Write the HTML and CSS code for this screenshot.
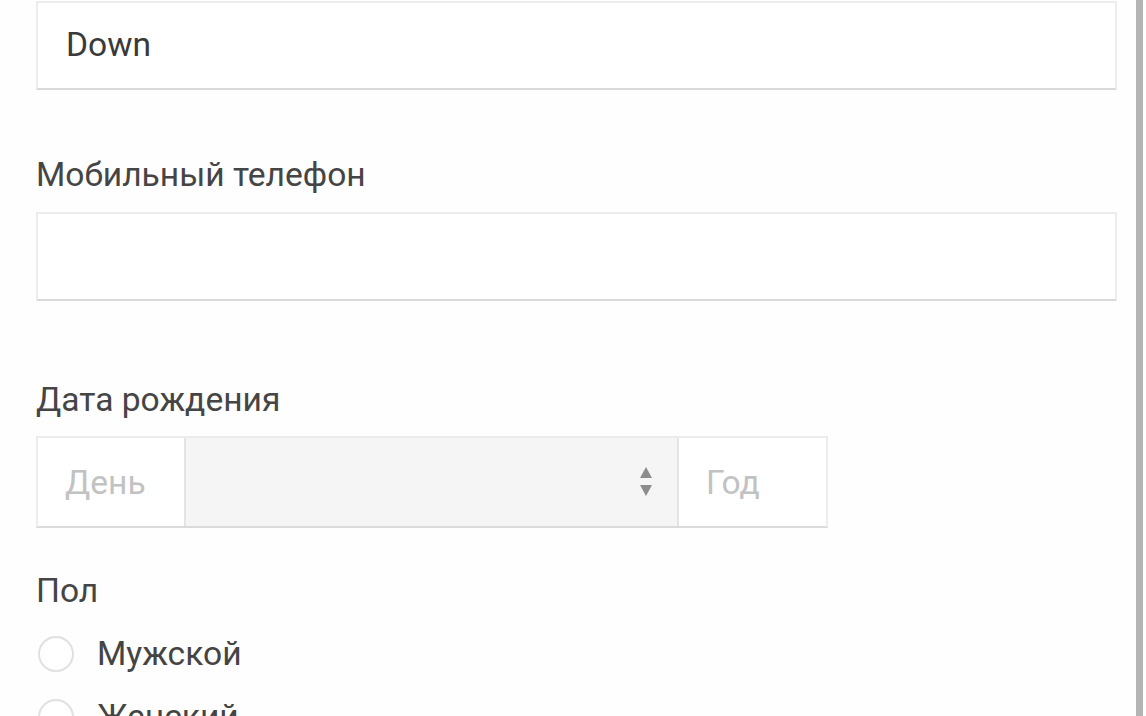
FILE: index.html
```html
<!DOCTYPE html>
<html lang="ru">
<head>
<meta charset="utf-8">
<link rel="stylesheet" href="styles.css">
</head>
<body>
<div class="page">
  <form class="form">
    <div class="input filled">Down</div>
    <div class="field">
      <div class="label">Мобильный телефон</div>
      <div class="input"></div>
    </div>
    <div class="field date-field">
      <div class="label">Дата рождения</div>
      <div class="date">
        <div class="cell day">День</div>
        <div class="cell month">
          <svg class="arrows" width="14" height="36" viewBox="0 0 14 36">
            <path d="M7 3 L13 14 L1 14 Z" fill="#8c8c8c"/>
            <path d="M1 21 L13 21 L7 32 Z" fill="#8c8c8c"/>
          </svg>
        </div>
        <div class="cell year">Год</div>
      </div>
    </div>
    <div class="field gender">
      <div class="label">Пол</div>
      <label class="radio"><span class="circle"></span><span>Мужской</span></label>
      <label class="radio"><span class="circle"></span><span>Женский</span></label>
    </div>
  </form>
  <div class="scrollbar"></div>
</div>
</body>
</html>
```

FILE: styles.css
```css
html, body {
  margin: 0;
  padding: 0;
  background: #fefefe;
  overflow: hidden;
}
body {
  font-family: Roboto, "Noto Sans", sans-serif;
  color: #444;
  font-size: 33.6px;
}
.page {
  display: flex;
  height: 716px;
  padding-left: 36px;
}
.form {
  width: 1081px;
  display: flex;
  flex-direction: column;
  padding-top: 1px;
}
.form > * {
  flex-shrink: 0;
}
.scrollbar {
  width: 7px;
  margin-left: 19px;
  background: #b4b4b4;
  height: 716px;
  flex-shrink: 0;
}
.input {
  box-sizing: border-box;
  height: 89px;
  border: 2px solid #ececec;
  border-bottom-color: #dadada;
  background: #fff;
  display: flex;
  align-items: center;
  padding-left: 28px;
  color: #3a3a3a;
  flex-shrink: 0;
}
.filled {
  padding-bottom: 2px;
}
.field {
  display: flex;
  flex-direction: column;
}
.label {
  line-height: 38px;
  color: #454545;
}
.field:nth-child(2) {
  margin-top: 66px;
}
.field:nth-child(2) .label {
  margin-bottom: 18px;
}
.date-field {
  margin-top: 80px;
}
.date-field .label {
  margin-bottom: 17px;
}
.date {
  display: flex;
  width: 792px;
  height: 92px;
  box-sizing: border-box;
  border: 2px solid #ececec;
  border-bottom-color: #dadada;
  background: #fff;
  flex-shrink: 0;
}
.cell {
  display: flex;
  align-items: center;
  color: #c2c2c2;
  padding-left: 27px;
  box-sizing: border-box;
}
.day {
  width: 148px;
  border-right: 2px solid #e4e4e4;
}
.month {
  width: 493px;
  background: #f5f5f5;
  justify-content: flex-end;
  padding-right: 24px;
  border-right: 2px solid #e4e4e4;
}
.year {
  flex: 1;
}
.gender {
  margin-top: 44px;
}
.gender .label {
  margin-bottom: 12px;
}
.radio {
  display: flex;
  align-items: center;
  gap: 23px;
  height: 63px;
  color: #444;
  flex-shrink: 0;
}
.circle {
  width: 36px;
  height: 36px;
  box-sizing: border-box;
  border: 2px solid #e0e0e0;
  border-radius: 50%;
  margin-left: 2px;
  background: #fff;
  flex-shrink: 0;
}
```
